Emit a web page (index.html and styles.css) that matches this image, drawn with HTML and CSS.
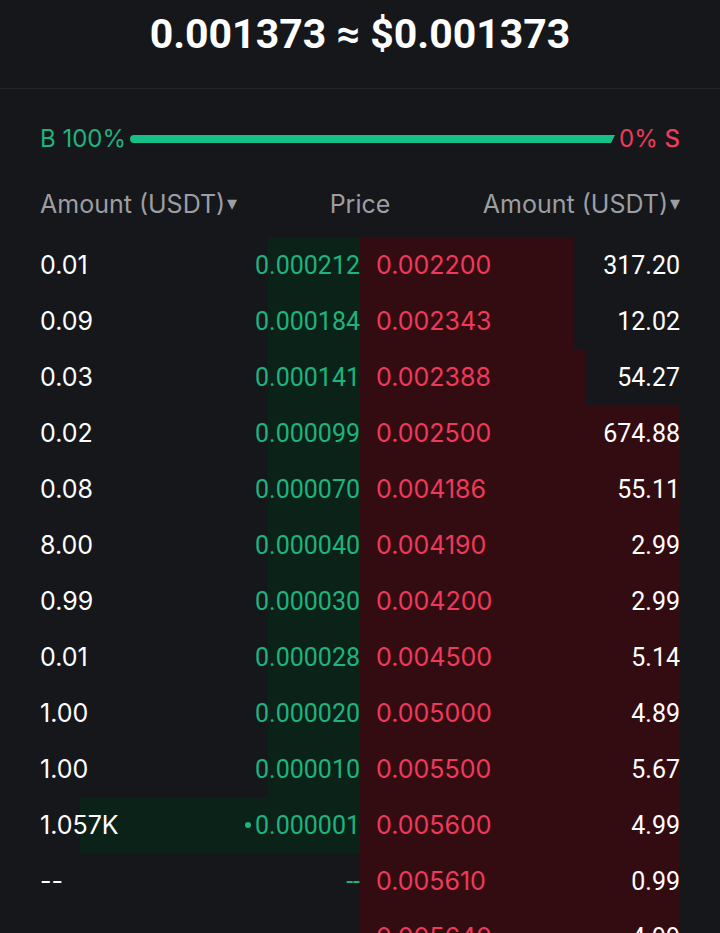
FILE: index.html
```html
<!doctype html>
<html lang="en">
<head>
    <meta charset="UTF-8">
    <meta name="viewport" content="width=device-width, initial-scale=1.0">
    <title>Order Book</title>
    <link rel="stylesheet" href="styles.css">
</head>
<body>
    <header class="top">
        <h1>0.001373 ≈ $0.001373</h1>
    </header>

    <div class="book">
        <div class="ratio">
            <span class="buy">B 100%</span>
            <div class="ratio-bar"></div>
            <span class="sell">0% <b>S</b></span>
        </div>

        <div class="cols">
            <span>Amount (USDT)<i class="caret">▾</i></span>
            <span class="col-price">Price</span>
            <span class="col-right">Amount (USDT)<i class="caret">▾</i></span>
        </div>

        <div class="rows">
            <div class="row">
                <div class="bid"><div class="depth" style="width: 92px"></div><span class="amt">0.01</span><span class="px">0.000212</span></div>
                <div class="ask"><div class="depth" style="width: 213px"></div><span class="px">0.002200</span><span class="amt">317.20</span></div>
            </div>
            <div class="row">
                <div class="bid"><div class="depth" style="width: 92px"></div><span class="amt">0.09</span><span class="px">0.000184</span></div>
                <div class="ask"><div class="depth" style="width: 213px"></div><span class="px">0.002343</span><span class="amt">12.02</span></div>
            </div>
            <div class="row">
                <div class="bid"><div class="depth" style="width: 92px"></div><span class="amt">0.03</span><span class="px">0.000141</span></div>
                <div class="ask"><div class="depth" style="width: 225px"></div><span class="px">0.002388</span><span class="amt">54.27</span></div>
            </div>
            <div class="row">
                <div class="bid"><div class="depth" style="width: 92px"></div><span class="amt">0.02</span><span class="px">0.000099</span></div>
                <div class="ask"><div class="depth" style="width: 320px"></div><span class="px">0.002500</span><span class="amt">674.88</span></div>
            </div>
            <div class="row">
                <div class="bid"><div class="depth" style="width: 92px"></div><span class="amt">0.08</span><span class="px">0.000070</span></div>
                <div class="ask"><div class="depth" style="width: 320px"></div><span class="px">0.004186</span><span class="amt">55.11</span></div>
            </div>
            <div class="row">
                <div class="bid"><div class="depth" style="width: 92px"></div><span class="amt">8.00</span><span class="px">0.000040</span></div>
                <div class="ask"><div class="depth" style="width: 320px"></div><span class="px">0.004190</span><span class="amt">2.99</span></div>
            </div>
            <div class="row">
                <div class="bid"><div class="depth" style="width: 92px"></div><span class="amt">0.99</span><span class="px">0.000030</span></div>
                <div class="ask"><div class="depth" style="width: 320px"></div><span class="px">0.004200</span><span class="amt">2.99</span></div>
            </div>
            <div class="row">
                <div class="bid"><div class="depth" style="width: 92px"></div><span class="amt">0.01</span><span class="px">0.000028</span></div>
                <div class="ask"><div class="depth" style="width: 320px"></div><span class="px">0.004500</span><span class="amt">5.14</span></div>
            </div>
            <div class="row">
                <div class="bid"><div class="depth" style="width: 92px"></div><span class="amt">1.00</span><span class="px">0.000020</span></div>
                <div class="ask"><div class="depth" style="width: 320px"></div><span class="px">0.005000</span><span class="amt">4.89</span></div>
            </div>
            <div class="row">
                <div class="bid"><div class="depth" style="width: 92px"></div><span class="amt">1.00</span><span class="px">0.000010</span></div>
                <div class="ask"><div class="depth" style="width: 320px"></div><span class="px">0.005500</span><span class="amt">5.67</span></div>
            </div>
            <div class="row">
                <div class="bid"><div class="depth" style="width: 280px"></div><span class="amt">1.057K</span><span class="px"><i class="dot"></i>0.000001</span></div>
                <div class="ask"><div class="depth" style="width: 320px"></div><span class="px">0.005600</span><span class="amt">4.99</span></div>
            </div>
            <div class="row">
                <div class="bid"><span class="amt">--</span><span class="px">--</span></div>
                <div class="ask"><div class="depth" style="width: 320px"></div><span class="px">0.005610</span><span class="amt">0.99</span></div>
            </div>
            <div class="row">
                <div class="bid"></div>
                <div class="ask"><div class="depth" style="width: 320px"></div><span class="px">0.005640</span><span class="amt">4.99</span></div>
            </div>
        </div>
    </div>
</body>
</html>
```

FILE: styles.css
```css
body {
    margin: 0;
    background: #16171a;
    color: #ffffff;
    font-family: Inter, Roboto, sans-serif;
    overflow: hidden;
}

.top {
    height: 88px;
    border-bottom: 1px solid #232428;
    display: flex;
    justify-content: center;
}

h1 {
    margin: 0;
    padding-top: 11px;
    font-family: Roboto, sans-serif;
    font-size: 41px;
    font-weight: 700;
    line-height: 46px;
}

.book {
    padding: 0 40px;
}

.ratio {
    margin-top: 29px;
    height: 40px;
    display: flex;
    align-items: center;
    gap: 4px;
    font-size: 24px;
}

.buy {
    color: #1db47f;
}

.sell {
    color: #f0395b;
}

.sell b {
    font-weight: 500;
}

.ratio-bar {
    flex: 1;
    height: 8px;
    margin-top: 2px;
    background: #16c087;
    border-radius: 4px 0 0 4px;
    clip-path: polygon(0 0, 100% 0, calc(100% - 4px) 100%, 0 100%);
}

.cols {
    margin-top: 18px;
    height: 56px;
    display: grid;
    grid-template-columns: 1fr auto 1fr;
    align-items: center;
    color: #9c9ea3;
    font-size: 25px;
    margin-bottom: 5px;
}

.col-right {
    text-align: right;
}

.caret {
    font-style: normal;
    font-size: 20px;
    vertical-align: 3px;
    margin-left: 2px;
}

.row {
    display: grid;
    grid-template-columns: 320px 320px;
    height: 56px;
    font-size: 25px;
}

.bid,
.ask {
    position: relative;
    display: flex;
    align-items: center;
    justify-content: space-between;
}

.bid .depth,
.ask .depth {
    position: absolute;
    top: 0;
    bottom: 0;
}

.bid .depth {
    right: 0;
    background: #0b2219;
}

.ask .depth {
    left: 0;
    background: #330c12;
}

.amt,
.px {
    position: relative;
}

.bid .px {
    color: #1db47f;
    font-family: Roboto, sans-serif;
}

.ask .px {
    color: #f0395b;
    padding-left: 16px;
}

.ask .amt {
    font-family: Roboto, sans-serif;
}

.dot {
    display: inline-block;
    width: 6px;
    height: 6px;
    border-radius: 50%;
    background: #1db47f;
    margin-right: 4px;
    vertical-align: 6px;
}
```
